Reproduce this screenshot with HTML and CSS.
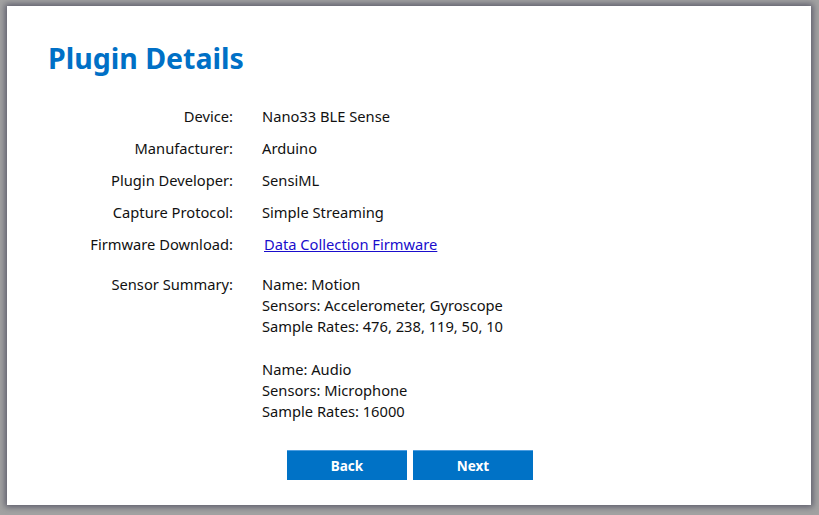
FILE: index.html
```html
<!DOCTYPE html>
<html>
<head>
<meta charset="utf-8">
<link rel="stylesheet" href="styles.css">
</head>
<body>
<div class="window">
  <h1 class="title">Plugin Details</h1>
  <div class="details">
    <div class="label">Device:</div><div class="value">Nano33 BLE Sense</div>
    <div class="label">Manufacturer:</div><div class="value">Arduino</div>
    <div class="label">Plugin Developer:</div><div class="value">SensiML</div>
    <div class="label">Capture Protocol:</div><div class="value">Simple Streaming</div>
    <div class="label">Firmware Download:</div><div class="value"><a class="link" href="#">Data Collection Firmware</a></div>
    <div class="label summary-label">Sensor Summary:</div>
    <div class="value summary">
      <div class="sensor">Name: Motion<br>Sensors: Accelerometer, Gyroscope<br>Sample Rates: 476, 238, 119, 50, 10</div>
      <div class="sensor">Name: Audio<br>Sensors: Microphone<br>Sample Rates: 16000</div>
    </div>
  </div>
  <div class="buttons">
    <button class="btn">Back</button>
    <button class="btn">Next</button>
  </div>
</div>
</body>
</html>
```

FILE: styles.css
```css
html, body {
  margin: 0;
  padding: 0;
}
body {
  background: #a2a2a2;
  width: 819px;
  height: 515px;
  overflow: hidden;
  font-family: "Noto Sans", "Open Sans", sans-serif;
}
.window {
  margin: 6px 0 0 7px;
  width: 804px;
  height: 499px;
  background: #ffffff;
  box-shadow: 0 0 6px 2px rgba(70, 70, 90, 0.75);
  box-sizing: border-box;
  padding: 34px 0 0 41px;
  display: flex;
  flex-direction: column;
}
.title {
  margin: 0;
  font-size: 28.5px;
  line-height: 36px;
  font-weight: bold;
  color: #0070c6;
}
.details {
  margin-top: 30px;
  display: grid;
  grid-template-columns: 185px auto;
  column-gap: 29px;
  row-gap: 11px;
  font-size: 14.7px;
  line-height: 21px;
  color: #111;
}
.label {
  text-align: right;
}
.link {
  color: #1a0dcc;
  margin-left: 2px;
}
.summary-label, .summary {
  margin-top: 8px;
}
.summary {
  display: flex;
  flex-direction: column;
  gap: 22px;
}
.buttons {
  margin-top: 28px;
  display: flex;
  justify-content: center;
  gap: 6px;
  padding-right: 39px;
}
.btn {
  width: 120px;
  height: 30px;
  border: none;
  border-top: 1px solid #4d9de0;
  background: #0072c6;
  color: #ffffff;
  font-family: "Noto Sans", "Open Sans", sans-serif;
  font-weight: bold;
  font-size: 13.5px;
  padding: 0;
}
```
